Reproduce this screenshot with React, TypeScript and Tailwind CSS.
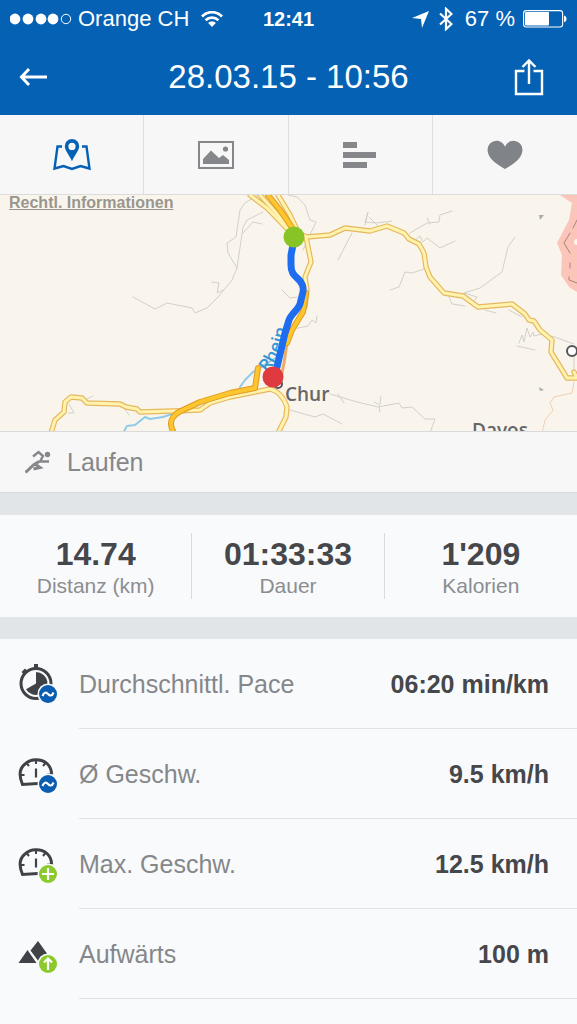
import type { ReactNode } from 'react'

function SignalDots() {
  return (
    <svg width="62" height="12" viewBox="0 0 62 12" aria-hidden="true">
      {[5, 18, 31, 43].map((cx) => (
        <circle key={cx} cx={cx} cy="6" r="5.4" fill="#fff" />
      ))}
      <circle cx="56" cy="6" r="4.7" fill="none" stroke="#fff" />
    </svg>
  )
}

function WifiIcon() {
  return (
    <svg width="22" height="16" viewBox="0 0 22 16" fill="none" stroke="#fff" strokeWidth="2.8" aria-hidden="true">
      <path d="M1 5.4C6.6-.2 15.4-.2 21 5.4" />
      <path d="M4.6 9.2c3.6-3.5 9.2-3.5 12.8 0" />
      <path d="M7.2 12c1.9-1.9 5.700-1.9 7.600 0L11 16z" fill="#fff" stroke="none" />
    </svg>
  )
}

function LocationIcon() {
  return (
    <svg width="17" height="17" viewBox="0 0 17 17" fill="#fff" aria-hidden="true">
      <path d="M17 0 10 17 9 8 0 7z" />
    </svg>
  )
}

function BluetoothIcon() {
  return (
    <svg width="14" height="24" viewBox="0 0 14 24" fill="none" stroke="#fff" strokeWidth="2.2" aria-hidden="true">
      <path d="M1 6.5 12.5 17 7 22.2V1.8L12.5 7 1 17.5" />
    </svg>
  )
}

function BatteryIcon() {
  return (
    <svg width="44" height="18" viewBox="0 0 44 18" aria-hidden="true">
      <rect x="0.6" y="0.6" width="39" height="16.4" rx="2.5" fill="none" stroke="#fff" strokeWidth="1.1" />
      <rect x="2" y="2" width="24" height="13.6" rx="1" fill="#fff" />
      <path d="M41 5.6c3.4.6 3.4 6 0 6.6z" fill="#fff" />
    </svg>
  )
}

function BackIcon() {
  return (
    <svg width="28" height="20" viewBox="0 0 28 20" fill="none" stroke="#fff" strokeWidth="3" aria-hidden="true">
      <path d="M10 2 2.500 10l7.500 8M2.500 10H28" />
    </svg>
  )
}

function ShareIcon() {
  return (
    <svg width="30" height="38" viewBox="0 0 30 38" fill="none" stroke="#fff" strokeWidth="2.4" aria-hidden="true">
      <path d="M10.5 13H2v23h26V13h-8.500" />
      <path d="M15 26V3M8.500 9 15 2.500 21.500 9" />
    </svg>
  )
}

function MapIcon() {
  return (
    <svg width="38" height="32" viewBox="0 0 38 32" aria-hidden="true">
      <path
        d="M9 7.500H4.500L1.500 29.500l9-2.500 8.500 3 8.500-3 9 2.500-3-22H29"
        fill="none"
        stroke="#0561b4"
        strokeWidth="2.4"
      />
      <path
        fillRule="evenodd"
        d="M19 0a7.200 7.200 0 0 0-7.200 7.200c0 4.300 4.200 8.300 7.200 15 3-6.700 7.200-10.700 7.200-15A7.200 7.200 0 0 0 19 0zm0 3.800a3.600 3.600 0 1 1 0 7.200 3.600 3.600 0 0 1 0-7.200z"
        fill="#0561b4"
      />
    </svg>
  )
}

function PhotoIcon() {
  return (
    <svg width="36" height="28" viewBox="0 0 36 28" fill="#85878a" aria-hidden="true">
      <rect x="1" y="1" width="34" height="26" fill="none" stroke="#85878a" strokeWidth="2" />
      <path d="M5 23v-5l8-8.500 8 7.500 4-3 6 5v4z" />
      <circle cx="27.500" cy="8" r="2.600" />
    </svg>
  )
}

function BarsIcon() {
  return (
    <svg width="34" height="26" viewBox="0 0 34 26" fill="#85878a" aria-hidden="true">
      <rect width="14" height="6" />
      <rect y="10" width="33" height="6" />
      <rect y="20" width="24" height="6" />
    </svg>
  )
}

function HeartIcon() {
  return (
    <svg width="36" height="30" viewBox="0 0 36 30" fill="#808387" aria-hidden="true">
      <path d="M18 29C10 24.500.5 18.500.5 9.500A9 9 0 0 1 9.500.8c4 0 7 2.400 8.500 5.900C19.500 3.200 22.500.8 26.500.8a9 9 0 0 1 9 8.700C35.500 18.500 26 24.500 18 29z" />
    </svg>
  )
}

function RunnerIcon() {
  return (
    <svg width="26" height="24" viewBox="0 0 26 24" fill="none" stroke="#85878a" strokeWidth="2.400" aria-hidden="true">
      <path d="M8 6.500 13.500 2 18 6l-3 5.500h9" />
      <path d="M.5 22.500 8.500 15l5.500-3.500L10 14l5 3.500-6.500 1.500" strokeWidth="3" />
      <circle cx="22.500" cy="4.500" r="2.700" fill="#85878a" stroke="none" />
    </svg>
  )
}

function Badge({ color, children }: { color: string; children: ReactNode }) {
  return (
    <>
      <circle cx="30" cy="31" r="10.500" fill="#f9fafc" />
      <circle cx="30" cy="31" r="9" fill={color} />
      <g fill="none" stroke="#fff" strokeWidth="2.200">
        {children}
      </g>
    </>
  )
}

function AverageBadge() {
  return (
    <Badge color="#0a5db0">
      <path d="M24.500 33c1.500-4 3.700-4 5.500-2s4 2.500 5.500-1.500" />
    </Badge>
  )
}

function PaceIcon() {
  return (
    <svg width="40" height="42" viewBox="0 0 40 42" aria-hidden="true">
      <circle cx="18" cy="20.500" r="15" fill="none" stroke="#3f4347" strokeWidth="3" />
      <path d="M18 20.500V9A11.500 11.500 0 1 1 8 26.200z" fill="#3f4347" />
      <path d="M16 1h4v5h-4zM3.500 9 7 5.500l3 3L6.500 12z" fill="#3f4347" />
      <AverageBadge />
    </svg>
  )
}

function SpeedDial() {
  return (
    <g fill="none" stroke="#3f4347" strokeWidth="2.400">
      <path d="M20 30.500 4.500 31.500C.5 22 2 15 7 11c5.500-5.500 16-5.800 22-.5 3.300 3 4.500 6.500 4.700 11" strokeWidth="3" />
      <path d="M18 15.500v9" strokeWidth="2.200" />
      <path d="M18 7v4M8.500 10l2.500 3M27.500 10 25 13M3 22h3.500M29 21.500h4" strokeWidth="2" />
    </g>
  )
}

function AverageSpeedIcon() {
  return (
    <svg width="40" height="42" viewBox="0 0 40 42" aria-hidden="true">
      <SpeedDial />
      <AverageBadge />
    </svg>
  )
}

function MaxSpeedIcon() {
  return (
    <svg width="40" height="42" viewBox="0 0 40 42" aria-hidden="true">
      <SpeedDial />
      <Badge color="#8cc92c">
        <path d="M24 31h12M30 25v12" />
      </Badge>
    </svg>
  )
}

function AscentIcon() {
  return (
    <svg width="40" height="42" viewBox="0 0 40 42" aria-hidden="true">
      <path d="M.5 30 9.500 17 18.500 30zM12.500 17.500 20 8l9 12.500L21 29z" fill="#3f4347" />
      <Badge color="#8cc92c">
        <path d="M30 37V26M26 29.500l4-4 4 4" />
      </Badge>
    </svg>
  )
}

const mainRoads = [
  'M302 40 307 42 330 40 345 33 370 36 387 31 404 38 409 44 419 49 424 58 426 72 430 82 444 98 463 101 478 112 512 109 525 119 529 125 534 126 540 135 552 145 551 157 567 183 577 183 574 177',
  'M306 42 311 67 305 82 307 95 305 112',
  'M250 0 267 13 291 38',
  'M260 0 278 20 293 37',
  'M278 0 290 20 297 35',
  'M51 238 55 225 64 217 65 207 71 202 82 203 87 208 120 209 126 212 137 214 140 217 173 216 200 215 210 208 230 202 255 197 270 194Q282 197 287 212L286 222 278 238',
]

const highways = [
  'M268 0 280 15 293 34',
  'M306 98 303 117 292 135 287 148',
  'M258 173 255 193 230 198 200 207 183 215Q165 223 174 238',
]

const paths = [
  'M133 102 155 114 167 108 192 113 195 118 207 113 218 102 232 85 237 73 228 58 227 48 236 42 240 15 245 8 258 0',
  'M237 73 243 32 247 25 263 17M243 38 253 27 262 29',
  'M212 87 219 88 217 98 223 95',
  'M288 0 297 2 305 10 310 25 316 27 303 55',
  'M282 95 290 103 297 102',
  'M293 134 308 131 312 125 316 128 317 121',
  'M338 65 352 38M365 30 368 17 365 27 377 28 392 26M369 22 378 31',
  'M330 199 357 207 378 212 399 208 402 213 412 212 425 224 435 224 430 238',
  'M338 199 344 208M374 207 380 210 381 201M379 212 380 217',
  'M290 215 315 222 323 219 342 229',
  'M390 95 399 92 405 77 412 78 424 74',
  'M410 38 427 28 439 27 440 20 452 16M427 23 430 29',
  'M413 47 420 41 423 47 427 43 440 53 455 46',
  'M464 98 480 93 502 77 508 52 515 42',
  'M464 98 477 102 475 105M449 102 452 109 465 111',
  'M485 115 496 118M509 115 522 122',
  'M519 148 522 140 524 147 527 133 530 142 533 137 534 141 542 139',
  'M517 151 535 155M552 141 574 149M574 162V182',
  'M69 209 74 218 68 218M87 204 93 201M124 213 129 220',
]

function RouteMap() {
  return (
    <svg
      className="block h-auto w-full"
      viewBox="0 0 577 236"
      role="img"
      aria-label="Strecke bei Chur"
      strokeLinejoin="round"
      strokeLinecap="round"
    >
      <rect width="577" height="236" fill="#f9f5ed" />
      <path d="M560 0 572 8 569 25 557 48 562 60 561 80 569 92 577 97V0z" fill="#fcc5b9" />
      <circle cx="577" cy="47" r="3" fill="#f9f5ed" />
      <path d="M577 25 573 33M570 38 564 48 570 58M570 68V73M569 82V85L577 88" fill="none" stroke="#a9847d" />
      <path d="M539 20H544L540 25zM539 192 544 195 540 196z" fill="#aaa" />

      <path d={paths.join('')} fill="none" stroke="#d3d0ca" />
      <path d="M574 187 572 198 554 202 550 208 553 215 545 225 542 238" fill="none" stroke="#efd0b2" />

      <g fill="none" stroke="#8fcbe8" strokeWidth="2">
        <path d="M123 238 127 231 135 230 145 222 150 224 163 222 172 219" />
        <path d="M240 192 245 185 253 177 277 162" />
      </g>
      <path d="M287 148 284 168 280 188" fill="none" stroke="#edaa63" strokeWidth="3" />
      <path d={mainRoads.join('')} fill="none" stroke="#e5b860" strokeWidth="5.400" />
      <path d={mainRoads.join('')} fill="none" stroke="#fff3ae" strokeWidth="3" />
      <path d={highways.join('')} fill="none" stroke="#e09a24" strokeWidth="6" />
      <path d={highways.join('')} fill="none" stroke="#fdc52e" strokeWidth="4" />

      <path id="rhein" d="M267 178Q281 164 287 134" fill="none" />
      <text className="font-['Open_Sans',sans-serif] text-[18px] font-semibold" fill="#3597d3">
        <textPath href="#rhein">Rhein</textPath>
      </text>

      <path
        d="M293 50 291 60V70C291 80 296 81 300 86S304 95 302 101L300 109C298 115 291 119 289 125L285 138 277 172"
        fill="none"
        stroke="#1e6df0"
        strokeWidth="7"
      />
      <circle cx="278" cy="189" r="4" fill="#fff" stroke="#555" strokeWidth="2" />
      <circle cx="572" cy="156" r="5" fill="#fff" stroke="#555" strokeWidth="2" />
      <circle cx="294" cy="42" r="10.500" fill="#88c425" />
      <circle cx="273" cy="182" r="10.500" fill="#df3a40" />

      <g
        className="font-['Open_Sans',sans-serif] text-[19px] font-semibold"
        fill="#666"
        stroke="#f9f5ed"
        strokeWidth="2"
        paintOrder="stroke"
      >
        <text x="285" y="206">Chur</text>
        <text x="472" y="242">Davos</text>
      </g>
    </svg>
  )
}

const tabs = [
  { label: 'Karte', icon: <MapIcon /> },
  { label: 'Fotos', icon: <PhotoIcon /> },
  { label: 'Details', icon: <BarsIcon /> },
  { label: 'Herzfrequenz', icon: <HeartIcon /> },
]

const stats = [
  { value: '14.74', label: 'Distanz (km)' },
  { value: '01:33:33', label: 'Dauer' },
  { value: "1'209", label: 'Kalorien' },
]

const details = [
  { label: 'Durchschnittl. Pace', value: '06:20 min/km', icon: <PaceIcon /> },
  { label: 'Ø Geschw.', value: '9.5 km/h', icon: <AverageSpeedIcon /> },
  { label: 'Max. Geschw.', value: '12.5 km/h', icon: <MaxSpeedIcon /> },
  { label: 'Aufwärts', value: '100 m', icon: <AscentIcon /> },
]

export default function App() {
  return (
    <div className="min-h-screen bg-[#f9fafc] font-['Liberation_Sans',Arial,sans-serif]">
      <header className="bg-[#0561b4] text-white">
        <div className="grid h-[38px] grid-cols-[1fr_auto_1fr] items-center px-2.5">
          <div className="flex items-center">
            <SignalDots />
            <span className="mr-3 ml-1.5 text-[22px] leading-6">Orange CH</span>
            <WifiIcon />
          </div>
          <span className="text-[20px] leading-6 font-bold">12:41</span>
          <div className="flex items-center justify-end">
            <LocationIcon />
            <span className="mr-3 ml-2.5">
              <BluetoothIcon />
            </span>
            <span className="mr-2 text-[22px] leading-6">67 %</span>
            <BatteryIcon />
          </div>
        </div>
        <div className="grid h-[77px] grid-cols-[1fr_auto_1fr] items-center">
          <button aria-label="Zurück" className="ml-[19px] justify-self-start">
            <BackIcon />
          </button>
          <h1 className="text-[33px] leading-10">28.03.15 - 10:56</h1>
          <button aria-label="Teilen" className="mr-[33px] justify-self-end">
            <ShareIcon />
          </button>
        </div>
      </header>

      <nav className="grid h-20 grid-cols-4 divide-x divide-[#dedfe1] border-b border-[#dcdcdc] bg-[#f7f7f7]">
        {tabs.map((tab) => (
          <button key={tab.label} aria-label={tab.label} className="flex items-center justify-center">
            {tab.icon}
          </button>
        ))}
      </nav>

      <section className="relative">
        <RouteMap />
        <a href="#legal" className="absolute top-0 left-[9px] text-[16px] leading-4 font-bold text-[#99968f] underline">
          Rechtl. Informationen
        </a>
      </section>

      <div className="flex h-[62px] items-center gap-4 border-y border-[#d8dadc] bg-[#f7f7f7] pl-[25px] text-[25px] leading-8 text-[#85878a]">
        <RunnerIcon />
        <span>Laufen</span>
      </div>

      <dl className="grid grid-cols-3 divide-x divide-[#d8dadc] border-y-[22px] border-[#e2e5e8] py-[18px] text-center">
        {stats.map((stat) => (
          <div key={stat.label} className="flex h-[66px] flex-col-reverse justify-center">
            <dt className="text-[21px] leading-6 text-[#8b8d90]">{stat.label}</dt>
            <dd className="text-[32px] leading-10 font-bold text-[#45474a]">{stat.value}</dd>
          </div>
        ))}
      </dl>

      <dl>
        {details.map((row) => (
          <div key={row.label} className="flex items-center pl-[18px]">
            {row.icon}
            <div className="ml-[21px] flex h-[90px] grow items-center justify-between border-b border-[#e0e2e4] pr-7 text-[25px] leading-8">
              <dt className="text-[#85878a]">{row.label}</dt>
              <dd className="font-bold text-[#45474a]">{row.value}</dd>
            </div>
          </div>
        ))}
      </dl>
    </div>
  )
}
